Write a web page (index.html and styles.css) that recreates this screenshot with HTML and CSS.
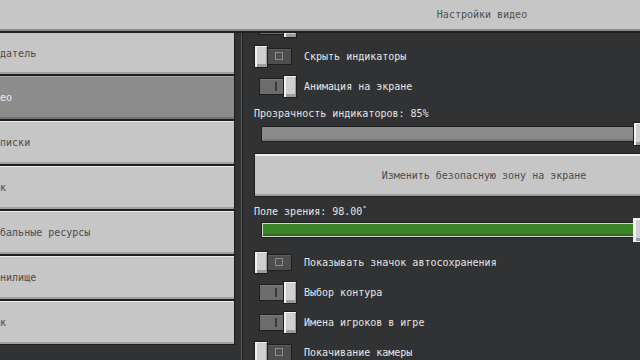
FILE: index.html
```html
<!DOCTYPE html>
<html>
<head>
  <meta charset="utf-8">
  <title>Настройки видео</title>
  <link rel="stylesheet" href="styles.css">
</head>
<body>
  <div class="screen">
    <header class="topbar">
      <div class="title">Настройки видео</div>
    </header>

    <div class="main">
      <nav class="side">
        <div class="side-list">
          <div class="tab tab-cut">Создатель</div>
          <div class="tab tab-active">Видео</div>
          <div class="tab">Подписки</div>
          <div class="tab">Звук</div>
          <div class="tab">Глобальные ресурсы</div>
          <div class="tab">Хранилище</div>
          <div class="tab">Язык</div>
        </div>
      </nav>

      <section class="panel">
        <div class="panel-inner">
          <div class="row">
            <div class="toggle on"><span class="track"><i></i></span><span class="knob"></span></div>
            <span class="label">Красивое небо</span>
          </div>
          <div class="row">
            <div class="toggle"><span class="track"><i></i></span><span class="knob"></span></div>
            <span class="label">Скрыть индикаторы</span>
          </div>
          <div class="row">
            <div class="toggle on"><span class="track"><i></i></span><span class="knob"></span></div>
            <span class="label">Анимация на экране</span>
          </div>

          <div class="caption caption-first">Прозрачность индикаторов: 85%</div>
          <div class="slider">
            <div class="slider-track"></div>
            <span class="thumb" style="left: 85%"></span>
          </div>

          <div class="wide-button">Изменить безопасную зону на экране</div>

          <div class="caption">Поле зрения: 98.00<sup>°</sup></div>
          <div class="slider slider-fov">
            <div class="slider-track green"><div class="fill" style="width: 85%"></div></div>
            <span class="thumb" style="left: 85%"></span>
          </div>

          <div class="row row-first">
            <div class="toggle"><span class="track"><i></i></span><span class="knob"></span></div>
            <span class="label">Показывать значок автосохранения</span>
          </div>
          <div class="row">
            <div class="toggle on"><span class="track"><i></i></span><span class="knob"></span></div>
            <span class="label">Выбор контура</span>
          </div>
          <div class="row">
            <div class="toggle on"><span class="track"><i></i></span><span class="knob"></span></div>
            <span class="label">Имена игроков в игре</span>
          </div>
          <div class="row">
            <div class="toggle"><span class="track"><i></i></span><span class="knob"></span></div>
            <span class="label">Покачивание камеры</span>
          </div>
        </div>
      </section>
    </div>
  </div>
</body>
</html>
```

FILE: styles.css
```css
* {
  box-sizing: border-box;
}

body {
  margin: 0;
  background-color: #313233;
  font-family: "DejaVu Sans Mono", "Liberation Mono", monospace;
  font-size: 10px;
  overflow: hidden;
}

.screen {
  width: 640px;
  height: 360px;
  overflow: hidden;
  display: flex;
  flex-direction: column;
}

/* верхняя панель */
.topbar {
  flex: none;
  height: 33px;
  background-color: #c6c6c6;
  border-bottom: 2px solid #1e1e1f;
  box-shadow: inset 0 -2px 0 #8b8b8b;
  padding-left: 243px;
  display: flex;
  align-items: center;
  padding-bottom: 2px;
  overflow: hidden;
}

.title {
  flex: none;
  width: 478px;
  text-align: center;
  color: #505050;
}

.main {
  flex: 1;
  display: flex;
  min-height: 0;
}

/* левое меню */
.side {
  flex: none;
  width: 241px;
  overflow: hidden;
  background-color: #313233;
}

.side-list {
  width: 261px;
  margin-left: -26px;
}

.tab {
  height: 45px;
  border: 1px solid #1e1e1f;
  background-color: #c6c6c6;
  box-shadow: inset 0 1px 0 #ececec, inset 0 -2px 0 #a0a0a0;
  color: #4c4c4c;
  padding-left: 7px;
  display: flex;
  align-items: center;
  white-space: nowrap;
}

.tab-cut {
  height: 42px;
  border-top: none;
  box-shadow: inset 0 -2px 0 #a0a0a0;
}

.tab-active {
  background-color: #8c8c8c;
  box-shadow: inset 0 1px 0 #a6a6a6, inset 0 -2px 0 #737373;
  color: #ececec;
}

/* правая панель настроек */
.panel {
  flex: 1;
  overflow: hidden;
  border-left: 1px solid #58595b;
  box-shadow: inset 1px 0 0 #1e1e1f;
  padding-left: 12px;
}

.panel-inner {
  width: 460px;
  margin-top: -22px;
}

.row {
  height: 30px;
  display: flex;
  align-items: center;
  gap: 7px;
}

.row-first {
  margin-top: 5px;
}

.label {
  color: #e6e6e6;
  white-space: nowrap;
}

.toggle {
  position: relative;
  width: 43px;
  height: 23px;
  flex: none;
}

.track {
  position: absolute;
  left: 5px;
  top: 3px;
  width: 33px;
  height: 17px;
  border: 1px solid #1e1e1f;
  background-color: #4e4e4e;
  box-shadow: inset 0 1px 0 #5c5c5c;
}

.track i {
  position: absolute;
  left: 15px;
  top: 3px;
  width: 8px;
  height: 8px;
  border: 1px solid #8e8e8e;
}

.toggle.on .track {
  background-color: #6c6c6c;
  box-shadow: inset 0 1px 0 #7c7c7c;
}

.toggle.on .track i {
  left: 15px;
  top: 3px;
  width: 2px;
  height: 9px;
  border: none;
  background-color: #3a3a3a;
}

.knob,
.thumb {
  position: absolute;
  top: 0;
  width: 14px;
  height: 23px;
  border: 1px solid #1e1e1f;
  background-color: #cfcfcf;
  box-shadow: inset 2px 1px 0 #f2f2f2, inset -1px -3px 0 #9c9c9c;
}

.knob {
  left: 0;
}

.toggle.on .knob {
  left: 29px;
}

.caption {
  height: 14px;
  line-height: 14px;
  margin-top: 5px;
  color: #e6e6e6;
  white-space: nowrap;
}

.caption-first {
  margin-top: 6px;
}

.caption sup {
  font-size: 7px;
  vertical-align: 4px;
}

.slider {
  position: relative;
  height: 25px;
  margin-left: 7px;
  width: 446px;
  display: flex;
  align-items: center;
}

.slider-fov {
  margin-top: 1px;
}

.slider-track {
  width: 100%;
  height: 16px;
  border: 1px solid #1e1e1f;
  background-color: #8b8b8b;
  box-shadow: inset 0 -2px 0 #7a7a7a;
}

.slider-track.green {
  background-color: #8b8b8b;
  border-color: #1e1e1f;
  box-shadow: inset 0 0 0 1px #d6d6d6;
  padding: 1px;
}

.fill {
  height: 100%;
  background-color: #3c8527;
  box-shadow: inset 0 -2px 0 #2f6b1e;
}

.thumb {
  top: 1px;
  height: 24px;
  margin-left: -7px;
}

.slider-fov .thumb {
  border-color: #f0f0f0;
}

.wide-button {
  height: 44px;
  margin-top: 7px;
  border: 1px solid #1e1e1f;
  background-color: #c6c6c6;
  box-shadow: inset 0 2px 0 #ececec, inset 0 -2px 0 #a0a0a0;
  color: #4c4c4c;
  display: flex;
  align-items: center;
  justify-content: center;
  white-space: nowrap;
}
```
